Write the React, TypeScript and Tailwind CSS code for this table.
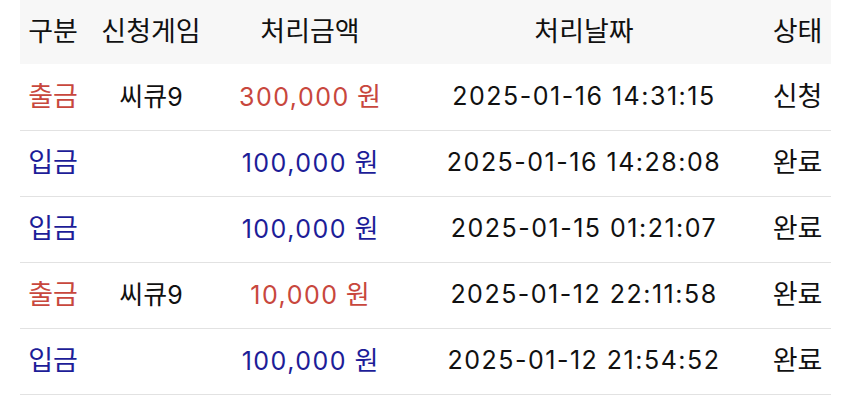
// 입출금 내역 테이블
const rows = [
  { kind: "출금", game: "씨큐9", amount: "300,000", date: "2025-01-16 14:31:15", status: "신청" },
  { kind: "입금", game: "", amount: "100,000", date: "2025-01-16 14:28:08", status: "완료" },
  { kind: "입금", game: "", amount: "100,000", date: "2025-01-15 01:21:07", status: "완료" },
  { kind: "출금", game: "씨큐9", amount: "10,000", date: "2025-01-12 22:11:58", status: "완료" },
  { kind: "입금", game: "", amount: "100,000", date: "2025-01-12 21:54:52", status: "완료" },
];

const tone = (kind: string) => (kind === "출금" ? "text-[#c8473d]" : "text-[#1d1d98]");

// 한글은 27px, 숫자는 25px + 자간으로 원본의 폭에 맞춤
const KO = "text-[27px]";
const NUM = "text-[25px] tracking-[0.06em]";

export default function App() {
  return (
    <div className="h-[407px] w-[850px] overflow-hidden bg-white pl-[20px] font-['Inter','Noto_Sans_CJK_KR',sans-serif] text-[#111]">
      <table className="w-[811px] table-fixed border-collapse">
        <colgroup>
          <col className="w-[66px]" />
          <col className="w-[130px]" />
          <col className="w-[188px]" />
          <col className="w-[360px]" />
          <col className="w-[67px]" />
        </colgroup>
        <thead>
          <tr className={`h-[64px] bg-[#f7f7f7] ${KO}`}>
            <th className="text-center font-normal">구분</th>
            <th className="text-center font-normal">신청게임</th>
            <th className="text-center font-normal">처리금액</th>
            <th className="text-center font-normal">처리날짜</th>
            <th className="text-center font-normal">상태</th>
          </tr>
        </thead>
        <tbody>
          {rows.map((r, i) => (
            <tr key={i} className="h-[66px] border-b border-[#e2e2e2]">
              <td className={`text-center ${KO} ${tone(r.kind)}`}>{r.kind}</td>
              <td className="text-center">
                {r.game && (
                  <span className="text-[26px]">
                    씨큐<span className="text-[25px]">9</span>
                  </span>
                )}
              </td>
              <td className={`text-center whitespace-nowrap text-[26px] ${tone(r.kind)}`}>
                <span className={NUM}>{r.amount}</span> 원
              </td>
              <td className={`text-center whitespace-nowrap ${NUM}`}>{r.date}</td>
              <td className={`text-center ${KO}`}>{r.status}</td>
            </tr>
          ))}
        </tbody>
      </table>
    </div>
  );
}
